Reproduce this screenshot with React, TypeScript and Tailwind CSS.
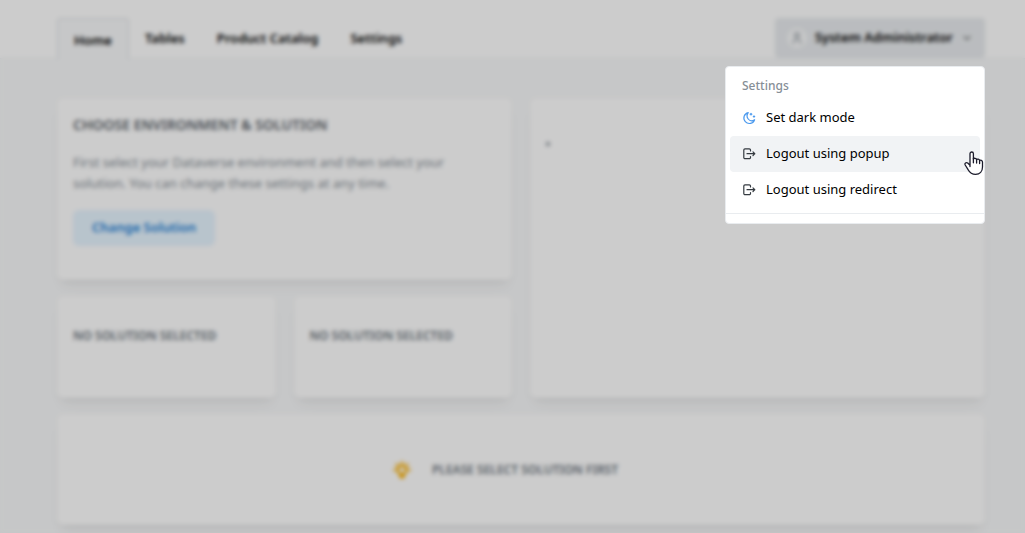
import type { ReactNode } from 'react'
import { TbBulb, TbChevronDown, TbUser } from 'react-icons/tb'

const links = ['Tables', 'Product Catalog', 'Settings']

function MoonIcon() {
  return (
    <svg
      className="size-3.5 text-[#4c9aee]"
      viewBox="0 0 14 14"
      fill="none"
      stroke="currentColor"
      strokeWidth="1.2"
      strokeLinecap="round"
      strokeLinejoin="round"
      aria-hidden="true"
    >
      <path d="M6.200 1.600A5.500 5.500 0 1 0 12.600 8.700C9.900 10.600 7.500 9.700 6.200 8C4.900 6.300 4.700 3.700 6.200 1.600Z" />
      <path d="M9 2.400v1.600M8.200 3.200h1.600M12 4.800v1.400M11.300 5.500h1.400" />
    </svg>
  )
}

function LogoutIcon() {
  return (
    <svg
      className="size-3.5 text-[#343a40]"
      viewBox="0 0 14 14"
      fill="none"
      stroke="currentColor"
      strokeWidth="1.2"
      strokeLinecap="round"
      strokeLinejoin="round"
      aria-hidden="true"
    >
      <path d="M8.500 4V3a1.200 1.200 0 0 0-1.200-1.200H3A1.200 1.200 0 0 0 1.800 3v7.500A1.200 1.200 0 0 0 3 11.700h4.300a1.200 1.200 0 0 0 1.200-1.200v-1" />
      <path d="M5 6.700h7.800M11 4.900l1.800 1.800L11 8.500" />
    </svg>
  )
}

const menuItems = [
  { label: 'Set dark mode', icon: <MoonIcon /> },
  { label: 'Logout using popup', icon: <LogoutIcon />, active: true },
  { label: 'Logout using redirect', icon: <LogoutIcon /> },
]

function Card({ className = '', children }: { className?: string; children: ReactNode }) {
  return (
    <section
      className={`rounded-md bg-white px-4 shadow-[0_1px_3px_rgba(0,0,0,0.05),0_10px_15px_-5px_rgba(0,0,0,0.05),0_7px_7px_-5px_rgba(0,0,0,0.04)] ${className}`}
    >
      {children}
    </section>
  )
}

function HandCursor() {
  return (
    <svg
      className="pointer-events-none absolute top-[84px] right-0 h-6 w-5"
      viewBox="0 0 20 24"
      fill="#fff"
      stroke="#1b1b2b"
      strokeWidth="1.3"
      strokeLinejoin="round"
      strokeLinecap="round"
      aria-hidden="true"
    >
      <path d="M6 15.500V2.700C6 .4 9.400.4 9.400 2.700V8c.4-1.100 3-1 3.200.6.6-.9 2.800-.7 3 .9.8-.8 2.900-.3 2.900 1.600V16c0 4.200-2.700 7.300-6.900 7.300-3.800 0-6-1.900-7.500-4.600L1.200 14c-.9-1.800 1-3.100 2.500-1.900L6 14.200" />
      <path d="M9.400 7.500v4.300M12.600 8.500v3.500M15.600 9.500v3" fill="none" />
    </svg>
  )
}

function UserMenu() {
  return (
    <div className="relative">
      <button className="flex h-10 items-center rounded-sm bg-[#e9ecef] px-3 font-semibold text-black">
        <span className="mr-2 flex size-5 items-center justify-center rounded-full bg-[#f8f9fa] text-[#868e96]">
          <TbUser className="size-3.5" />
        </span>
        System Administrator
        <TbChevronDown className="ml-2 size-3" />
      </button>
      <div
        role="menu"
        className="absolute top-12 right-0 z-20 w-[260px] rounded-sm border border-[#e9ecef] bg-white p-1 text-black"
      >
        <div className="px-3 py-1.5 text-xs leading-[17px] font-medium text-[#868e96]">Settings</div>
        {menuItems.map((item) => (
          <button
            key={item.label}
            role="menuitem"
            className={`flex h-9 w-full items-center gap-2.5 rounded-sm px-3 text-left ${item.active ? 'bg-[#f1f3f5]' : ''}`}
          >
            {item.icon}
            {item.label}
          </button>
        ))}
        <hr className="-mx-1 my-[5px] border-[#e9ecef]" />
        <HandCursor />
      </div>
    </div>
  )
}

export default function App() {
  return (
    <div className="min-h-screen bg-[#f8f9fa] font-['Noto_Sans',sans-serif] text-[13px] text-black">
      <header className="border-b border-[#f1f3f5] bg-white pt-[18px] pl-[17px]">
        <div className="mx-auto flex max-w-[928px] items-start justify-between">
          <nav className="-mb-px flex h-[41px] items-center font-semibold">
            <a
              href="#"
              className="flex h-full items-center rounded-t-sm border border-b-0 border-[#dee2e6] bg-[#f8f9fa] px-4 pt-1"
            >
              Home
            </a>
            {links.map((link) => (
              <a key={link} href="#" className="px-4">
                {link}
              </a>
            ))}
          </nav>
          <UserMenu />
        </div>
      </header>

      <main className="pt-[39px] pl-[17px]">
        <div className="mx-auto grid max-w-[928px] grid-cols-4 gap-x-[18px] gap-y-4">
          <Card className="col-span-2 h-[182px] pt-4">
            <h2 className="text-sm leading-[22px] font-semibold text-[#5c636a]">
              CHOOSE ENVIRONMENT &amp; SOLUTION
            </h2>
            <p className="mt-4 max-w-[400px] leading-[21px] text-[#868e96]">
              First select your Dataverse environment and then select your solution. You can change
              these settings at any time.
            </p>
            <button className="mt-4 h-9 rounded-md bg-[#e7f5ff] px-[19px] font-semibold text-[#1c7ed6]">
              Change Solution
            </button>
          </Card>
          <Card className="col-span-2 row-span-2 pt-11">
            <div className="size-1 rounded-full bg-[#868e96]" />
          </Card>
          <Card className="h-[102px] pt-[30px]">
            <h3 className="text-xs leading-5 font-semibold text-[#6c757d]">NO SOLUTION SELECTED</h3>
          </Card>
          <Card className="h-[102px] pt-[30px]">
            <h3 className="text-xs leading-5 font-semibold text-[#6c757d]">NO SOLUTION SELECTED</h3>
          </Card>
          <Card className="col-span-4 flex h-[111px] items-center justify-center gap-5 pr-12">
            <TbBulb className="size-5 text-[#fab005]" strokeWidth={3} />
            <h3 className="text-xs leading-5 font-semibold text-[#6c757d]">
              PLEASE SELECT SOLUTION FIRST
            </h3>
          </Card>
        </div>
      </main>

      <div className="fixed inset-0 z-10 bg-black/20 backdrop-blur-[2px]" />
    </div>
  )
}
